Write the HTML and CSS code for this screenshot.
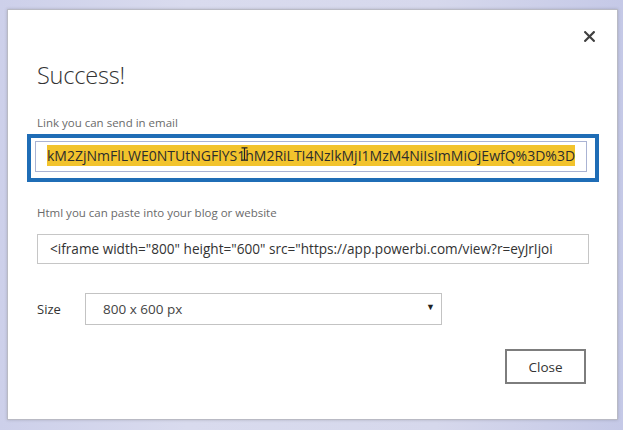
FILE: index.html
```html
<!DOCTYPE html>
<html>
<head>
<meta charset="utf-8">
<link rel="stylesheet" href="styles.css">
</head>
<body>
<div class="backdrop">
  <div class="dialog">
    <div class="header">
      <span class="close-x">
        <svg width="11" height="11" viewBox="0 0 11 11"><path d="M1.2 1.2 L9.8 9.8 M9.8 1.2 L1.2 9.8" stroke="#404040" stroke-width="2.2" stroke-linecap="square"/></svg>
      </span>
    </div>
    <h1 class="title">Success!</h1>
    <div class="label label-link">Link you can send in email</div>
    <div class="focus-ring">
      <div class="field field-link"><span class="sel">kM2ZjNmFlLWE0NTUtNGFlYS1hM2RiLTI4NzlkMjI1MzM4NiIsImMiOjEwfQ%3D%3D</span><svg class="ibeam" width="7" height="14" viewBox="0 0 7 14"><path d="M0.5 0.8 H6.5 M3.5 0.8 V13.2 M0.5 13.2 H6.5" stroke="#222" stroke-width="1.2" fill="none"/></svg></div>
    </div>
    <div class="label label-html">Html you can paste into your blog or website</div>
    <div class="field field-html">&lt;iframe width="800" height="600" src="https://app.powerbi.com/view?r=eyJrIjoi</div>
    <div class="size-row">
      <span class="size-label">Size</span>
      <div class="select"><span>800 x 600 px</span><span class="caret">▼</span></div>
    </div>
    <div class="footer">
      <div class="btn">Close</div>
    </div>
  </div>
</div>
</body>
</html>
```
FILE: styles.css
```css
html, body {
  margin: 0;
  padding: 0;
}
body {
  width: 623px;
  height: 430px;
  overflow: hidden;
  font-family: "Open Sans", "Noto Sans", sans-serif;
}
.backdrop {
  width: 623px;
  height: 430px;
  box-sizing: border-box;
  padding: 9px 0 0 7px;
  background: linear-gradient(90deg, #cdd0ea 0%, #d9dbee 30%, #d6d8ec 70%, #c5c9e7 100%);
}
.dialog {
  width: 611px;
  height: 411px;
  box-sizing: border-box;
  background: #fff;
  border: 1px solid #b9bac4;
  box-shadow: 0 0 3px rgba(0,0,0,0.18);
  padding: 0 0 0 29px;
  display: flex;
  flex-direction: column;
}
.header {
  display: flex;
  justify-content: flex-end;
  padding: 21px 22px 0 0;
  height: 11px;
}
.close-x {
  display: block;
  width: 11px;
  height: 11px;
}
.close-x svg {
  display: block;
}
.title {
  margin: 17px 0 0 0;
  font-weight: 300;
  font-size: 23.5px;
  line-height: 32px;
  color: #333;
  letter-spacing: -0.2px;
}
.label {
  font-size: 11.5px;
  line-height: 14px;
  color: #6a6a6a;
}
.label-link {
  margin-top: 25px;
}
.focus-ring {
  margin: 4px 0 0 -10px;
  width: 572px;
  height: 48px;
  box-sizing: border-box;
  border: 4px solid #1f6db6;
  padding: 3px 6px 0 4px;
}
.field {
  position: relative;
  box-sizing: border-box;
  white-space: nowrap;
  overflow: hidden;
  color: #333;
}
.field-link {
  width: 552px;
  height: 31px;
  border: 1.5px solid #aab3d3;
  padding: 0 0 0 11px;
  font-size: 14px;
  line-height: 28px;
}
.sel {
  background: #f2c32c;
  color: #2d2d2d;
  padding: 1px 0;
}
.ibeam {
  position: absolute;
  left: 205px;
  top: 5px;
}
.label-html {
  margin-top: 24px;
}
.field-html {
  margin-top: 14px;
  width: 552px;
  height: 30px;
  border: 1px solid #c6c6c6;
  padding: 0 0 0 12px;
  font-size: 13.6px;
  line-height: 28px;
  color: #333;
}
.size-row {
  margin-top: 29px;
  display: flex;
  align-items: center;
}
.size-label {
  width: 48px;
  font-size: 13px;
  color: #333;
}
.select {
  width: 357px;
  height: 32px;
  box-sizing: border-box;
  border: 1px solid #c3c3c3;
  display: flex;
  align-items: center;
  justify-content: space-between;
  padding: 0 6px 0 17px;
  font-size: 13.5px;
  color: #444;
}
.caret {
  font-size: 9px;
  color: #222;
  margin-top: -5px;
}
.footer {
  margin-top: 24px;
  display: flex;
  justify-content: flex-end;
  padding-right: 31px;
}
.btn {
  width: 81px;
  height: 35px;
  box-sizing: border-box;
  border: 2px solid #7d7d7d;
  display: flex;
  align-items: center;
  justify-content: center;
  font-size: 13.5px;
  color: #333;
  background: #fff;
}
```
